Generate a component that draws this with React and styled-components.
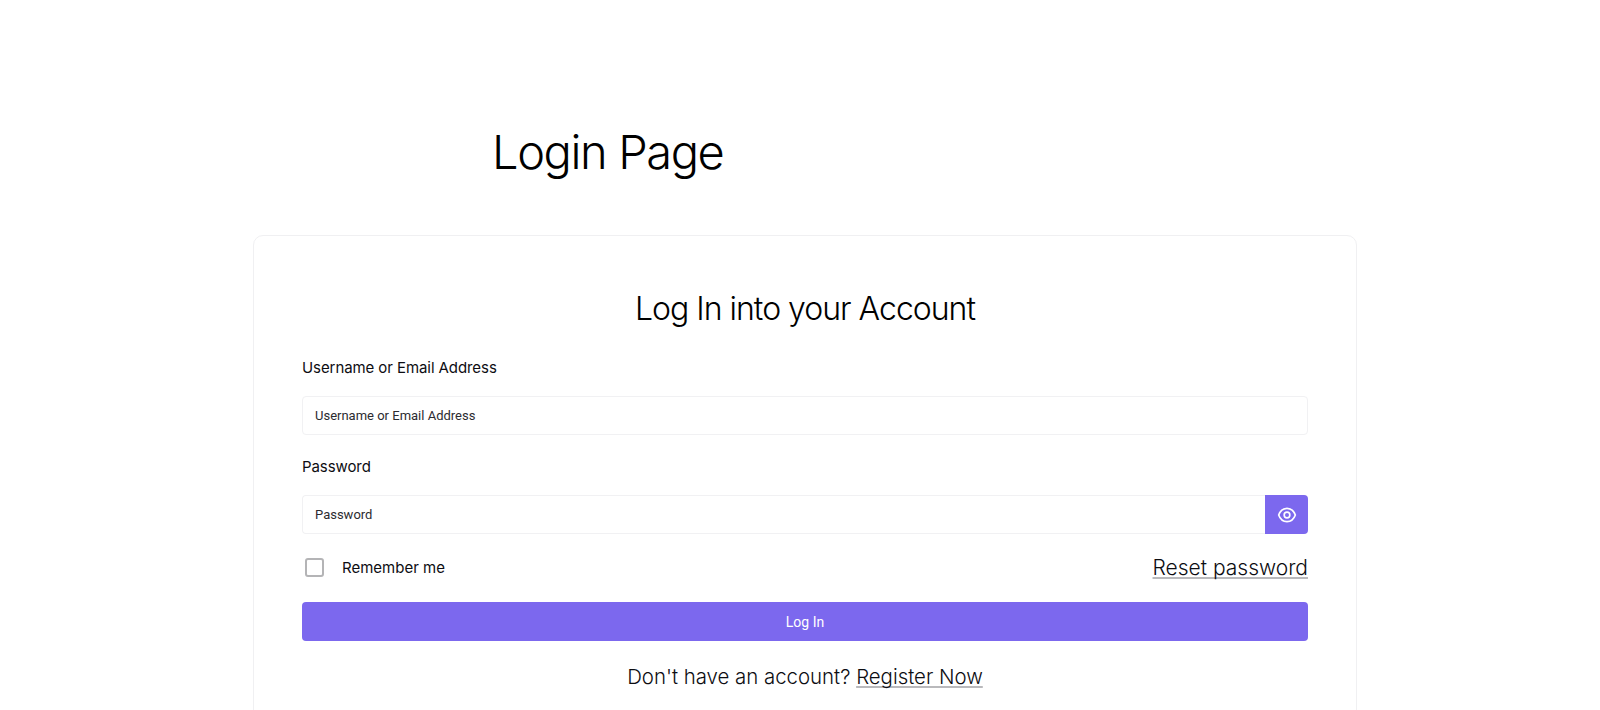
import React from "react";
import styled, { createGlobalStyle } from "styled-components";

const GlobalStyle = createGlobalStyle`
  html, body {
    margin: 0;
    padding: 0;
    height: 710px;
    overflow: hidden;
    background: #fff;
  }
  * { box-sizing: border-box; }
`;

const Page = styled.div`
  width: 1600px;
  height: 710px;
  overflow: hidden;
  padding: 117px 243px 0 253px;
  font-family: Inter, "Noto Sans", sans-serif;
  color: #0d0d12;
`;

const PageTitle = styled.h1`
  margin: 0 0 48px 239px;
  height: 70px;
  font-size: 47px;
  line-height: 70px;
  font-weight: 300;
  letter-spacing: -1.4px;
  color: #000;
`;

const Card = styled.div`
  width: 1104px;
  height: 600px;
  padding: 53px 48px 0;
  background: #fff;
  border: 1px solid #f0f0f2;
  border-radius: 10px;
`;

const CardTitle = styled.h2`
  margin: 0 0 27px;
  height: 40px;
  font-size: 32px;
  line-height: 40px;
  font-weight: 300;
  letter-spacing: -1px;
  text-align: center;
  color: #000;
`;

const Label = styled.label`
  display: block;
  height: 24px;
  margin-bottom: 16px;
  font-size: 15px;
  line-height: 24px;
  font-weight: 400;
  letter-spacing: -0.08px;
`;

const InputRow = styled.div`
  display: flex;
  height: 39px;
  margin-bottom: ${(p) => p.$gap}px;
`;

const Input = styled.input`
  flex: 1;
  min-width: 0;
  height: 39px;
  padding: 0 12px;
  border: 1px solid #f1f1f3;
  border-radius: ${(p) => (p.$joined ? "4px 0 0 4px" : "4px")};
  border-right-width: ${(p) => (p.$joined ? 0 : 1)}px;
  font-family: Roboto, Inter, sans-serif;
  font-size: 13px;
  outline: none;
  &::placeholder {
    color: #2b2b30;
    opacity: 1;
  }
`;

const EyeButton = styled.button`
  display: flex;
  align-items: center;
  justify-content: center;
  width: 43px;
  height: 39px;
  padding: 0;
  border: 0;
  border-radius: 0 4px 4px 0;
  background: #7c68ee;
  color: #fff;
`;

const OptionsRow = styled.div`
  display: flex;
  align-items: center;
  justify-content: space-between;
  height: 30px;
  margin-bottom: 20px;
`;

const Remember = styled.label`
  display: flex;
  align-items: center;
  gap: 18px;
  padding-left: 3px;
  font-size: 15px;
  font-weight: 400;
`;

const CheckBox = styled.span`
  display: block;
  width: 19px;
  height: 19px;
  border: 2px solid #b4b4b6;
  border-radius: 3px;
  background: #fff;
`;

const TextLink = styled.a`
  font-size: ${(p) => p.$size}px;
  font-weight: 300;
  color: #0d0d12;
  text-decoration: underline;
  text-decoration-color: #b9b9bc;
  text-decoration-thickness: 2px;
  text-underline-offset: 2px;
  text-decoration-skip-ink: none;
`;

const SubmitButton = styled.button`
  display: block;
  width: 100%;
  height: 39px;
  margin-bottom: 21px;
  border: 0;
  border-radius: 4px;
  background: #7c68ee;
  color: #fff;
  font-family: Roboto, Inter, sans-serif;
  font-size: 14px;
  font-weight: 400;
`;

const RegisterLine = styled.p`
  margin: 0;
  font-size: 20.4px;
  line-height: 30px;
  font-weight: 300;
  text-align: center;
`;

const EyeIcon = () => (
  <svg width="20" height="20" viewBox="0 0 24 24" fill="none" stroke="currentColor" strokeWidth="2">
    <path d="M2 12c1.800-5 5.600-8 10-8s8.200 3 10 8c-1.800 5-5.600 8-10 8s-8.200-3-10-8z" />
    <circle cx="12" cy="12" r="3.4" />
  </svg>
);

export default function App() {
  return (
    <>
      <GlobalStyle />
      <Page>
        <PageTitle>Login Page</PageTitle>
        <Card>
          <CardTitle>Log In into your Account</CardTitle>
          <Label>Username or Email Address</Label>
          <InputRow $gap={20}>
            <Input placeholder="Username or Email Address" />
          </InputRow>
          <Label>Password</Label>
          <InputRow $gap={18}>
            <Input $joined placeholder="Password" />
            <EyeButton type="button">
              <EyeIcon />
            </EyeButton>
          </InputRow>
          <OptionsRow>
            <Remember>
              <CheckBox />
              Remember me
            </Remember>
            <TextLink href="#" $size={21}>Reset password</TextLink>
          </OptionsRow>
          <SubmitButton type="button">Log In</SubmitButton>
          <RegisterLine>
            Don't have an account? <TextLink href="#" $size={20.4}>Register Now</TextLink>
          </RegisterLine>
        </Card>
      </Page>
    </>
  );
}
